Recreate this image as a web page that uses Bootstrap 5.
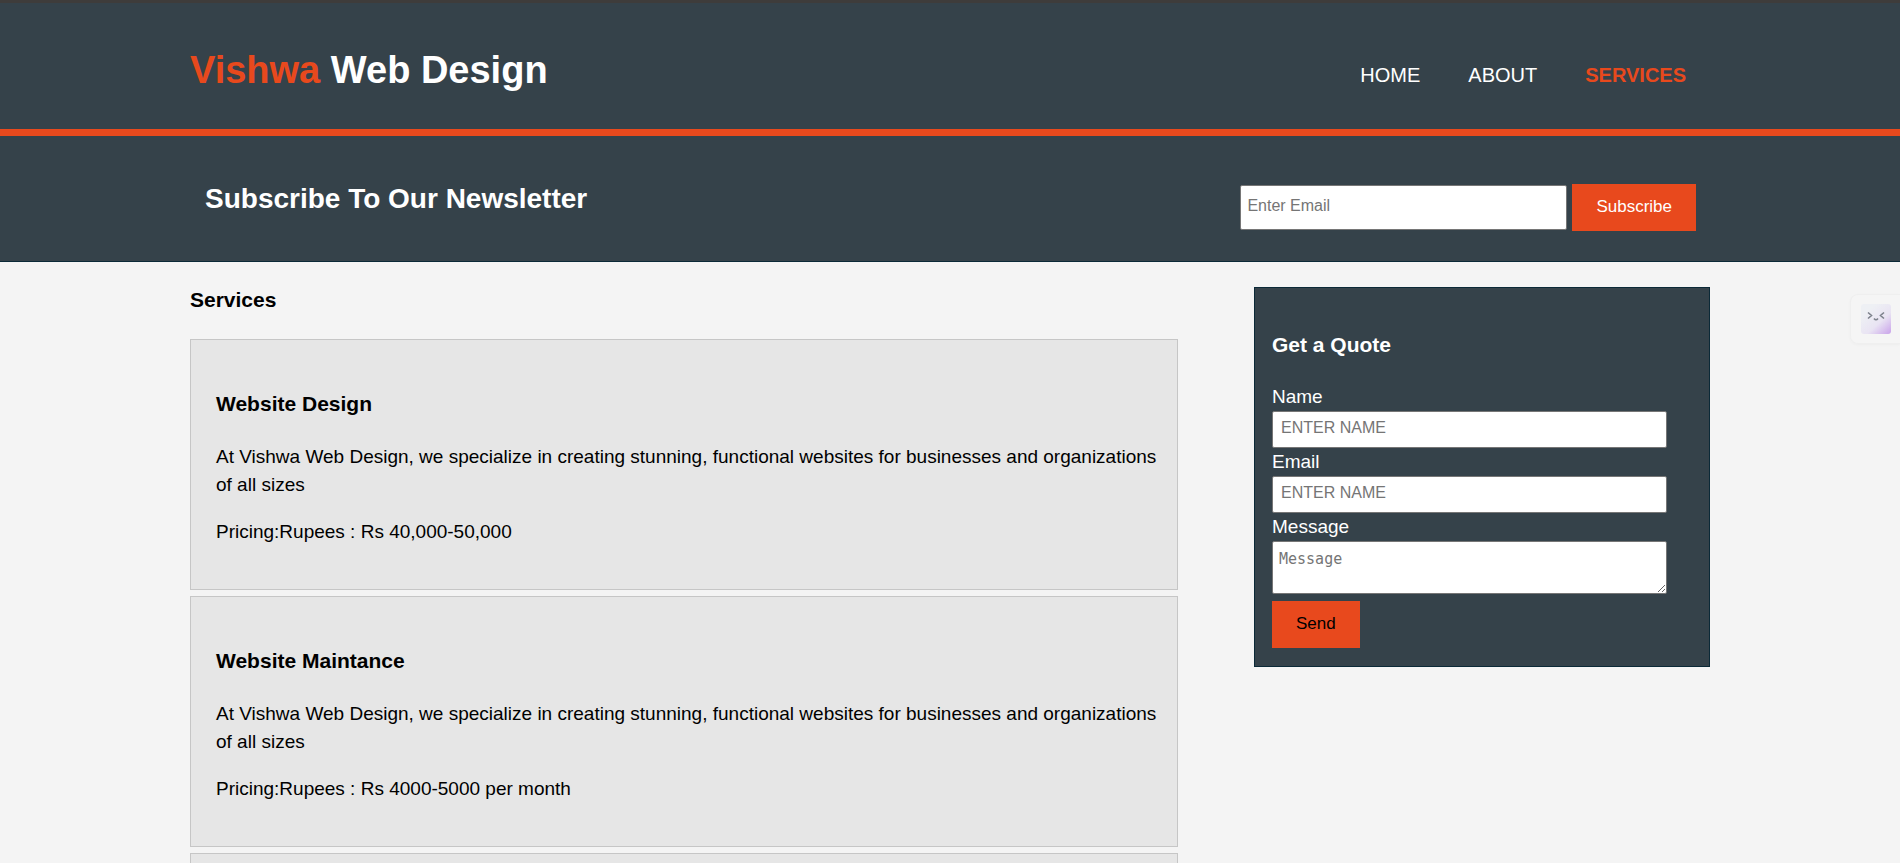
<!DOCTYPE html>
<html lang="en">
<head>
<meta charset="utf-8">
<meta name="viewport" content="width=device-width, initial-scale=1">
<title>Vishwa Web Design | Services</title>
<link href="https://cdn.jsdelivr.net/npm/bootstrap@5.3.0/dist/css/bootstrap.min.css" rel="stylesheet">
<style>
  :root { --slate: #35424a; --slate-edge: #0b2937; --flame: #e8491d; }
  body { font-family: "Liberation Sans", Arial, sans-serif; font-size: 19px; line-height: 28px; color: #000; background: #f4f4f4; }
  h1, h2, h3 { font-weight: 700; margin: 0; }
  h1 { font-size: 38px; line-height: 56px; }
  h2 { font-size: 28px; line-height: 42px; }
  h3 { font-size: 21px; line-height: 32px; }
  .wrap { width: 80%; margin: 0 auto; }
  .site-header { background: var(--slate); color: #fff; border-top: 3px solid #3e3c3b; border-bottom: 7px solid var(--flame); padding: 39px 0 31px; }
  .accent { color: var(--flame); }
  .site-nav { gap: 48px; padding-right: 24px; padding-top: 9px; font-size: 20px; }
  .site-nav a { color: #fff; text-decoration: none; }
  .site-nav a.current { color: var(--flame); font-weight: 700; }
  .newsletter { background: var(--slate); color: #fff; border-bottom: 1px solid var(--slate-edge); padding: 41px 0 30px; }
  .newsletter .wrap { padding: 0 14px 0 15px; }
  .newsletter h2 { padding-top: 1px; }
  .newsletter form { gap: 5px; padding-top: 7px; }
  .field { border: 1px solid #767676; border-radius: 2px; background: #fff; color: #000; font-size: 16px; line-height: 20px; }
  .field::placeholder { color: #757575; opacity: 1; }
  .field-email { width: 327px; height: 45px; padding: 0 6px 3px; }
  .flat-btn { height: 47px; border: 0; background: var(--flame); font-size: 17px; line-height: 20px; padding: 0 24px 2px; }
  .content { padding-top: 22px; }
  .services { width: 65%; }
  .services > h3 { margin-bottom: 23px; }
  .service { background: #e6e6e6; border: 1px solid #c6c6c6; padding: 48px 20px 43px 25px; margin-bottom: 6px; }
  .service h3 { margin-bottom: 23px; }
  .service p { margin: 0 0 19px; }
  .service p:last-child { margin: 0; }
  .service-last { margin-bottom: 0; padding: 0; border-bottom: 0; }
  .quote { width: 30%; background: var(--slate); color: #fff; border: 1px solid var(--slate-edge); padding: 41px 17px 18px; margin-top: 3px; }
  .quote h3 { margin-bottom: 22px; }
  .quote label { display: block; }
  .quote .field { display: block; width: 94%; height: 37px; padding: 0 8px 3px; }
  .quote textarea.field { height: 53px; padding: 7px 6px; margin-bottom: 7px; font-family: "DejaVu Sans Mono", monospace; font-size: 15px; }
  .helper-tab { position: fixed; right: 0; top: 294px; width: 50px; height: 50px; padding: 9px 10px; border: 1px solid #efefef; border-right: 0; border-radius: 8px 0 0 8px; background: #f5f5f5; box-shadow: 0 1px 3px #00000008; line-height: 0; text-align: left; }
</style>
</head>
<body class="d-flex flex-column min-vh-100">
<header class="site-header">
  <div class="wrap d-flex justify-content-between align-items-center">
    <h1><span class="accent">Vishwa</span> Web Design</h1>
    <nav class="site-nav d-flex">
      <a href="#">HOME</a>
      <a href="#">ABOUT</a>
      <a href="#" class="current" aria-current="page">SERVICES</a>
    </nav>
  </div>
</header>

<section class="newsletter">
  <div class="wrap d-flex justify-content-between align-items-start">
    <h2>Subscribe To Our Newsletter</h2>
    <form class="d-flex align-items-center">
      <input type="email" class="field field-email" placeholder="Enter Email" aria-label="Email address">
      <button type="submit" class="flat-btn text-white">Subscribe</button>
    </form>
  </div>
</section>

<main class="content wrap d-flex justify-content-between flex-grow-1">
  <section class="services d-flex flex-column">
    <h3>Services</h3>
    <article class="service">
      <h3>Website Design</h3>
      <p>At Vishwa Web Design, we specialize in creating stunning, functional websites for businesses and organizations of all sizes</p>
      <p>Pricing:Rupees : Rs 40,000-50,000</p>
    </article>
    <article class="service">
      <h3>Website Maintance</h3>
      <p>At Vishwa Web Design, we specialize in creating stunning, functional websites for businesses and organizations of all sizes</p>
      <p>Pricing:Rupees : Rs 4000-5000 per month</p>
    </article>
    <article class="service service-last flex-grow-1"></article>
  </section>

  <aside class="quote align-self-start">
    <h3>Get a Quote</h3>
    <form>
      <label for="q-name">Name</label>
      <input id="q-name" type="text" class="field" placeholder="ENTER NAME">
      <label for="q-email">Email</label>
      <input id="q-email" type="text" class="field" placeholder="ENTER NAME">
      <label for="q-message">Message</label>
      <textarea id="q-message" class="field" placeholder="Message"></textarea>
      <button type="submit" class="flat-btn text-black d-block">Send</button>
    </form>
  </aside>
</main>

<button type="button" class="helper-tab" aria-label="Open assistant">
  <svg width="30" height="30" viewBox="0 0 30 30" fill="none">
    <defs>
      <linearGradient id="tabFill" x1="8" y1="6" x2="30" y2="30" gradientUnits="userSpaceOnUse">
        <stop offset="0" stop-color="#eef0f4"/><stop offset=".5" stop-color="#e9e4f3"/><stop offset="1" stop-color="#c9a2ea"/>
      </linearGradient>
    </defs>
    <rect width="30" height="30" rx="3" fill="url(#tabFill)"/>
    <path d="M7 8.500l3.500 3L7 14.500M23 8.500l-3.500 3 3.500 3M13 14.500q2 2.500 4 0" stroke="#7d828c" stroke-width="1.600"/>
  </svg>
</button>
<script src="https://cdn.jsdelivr.net/npm/bootstrap@5.3.0/dist/js/bootstrap.bundle.min.js"></script>
</body>
</html>
